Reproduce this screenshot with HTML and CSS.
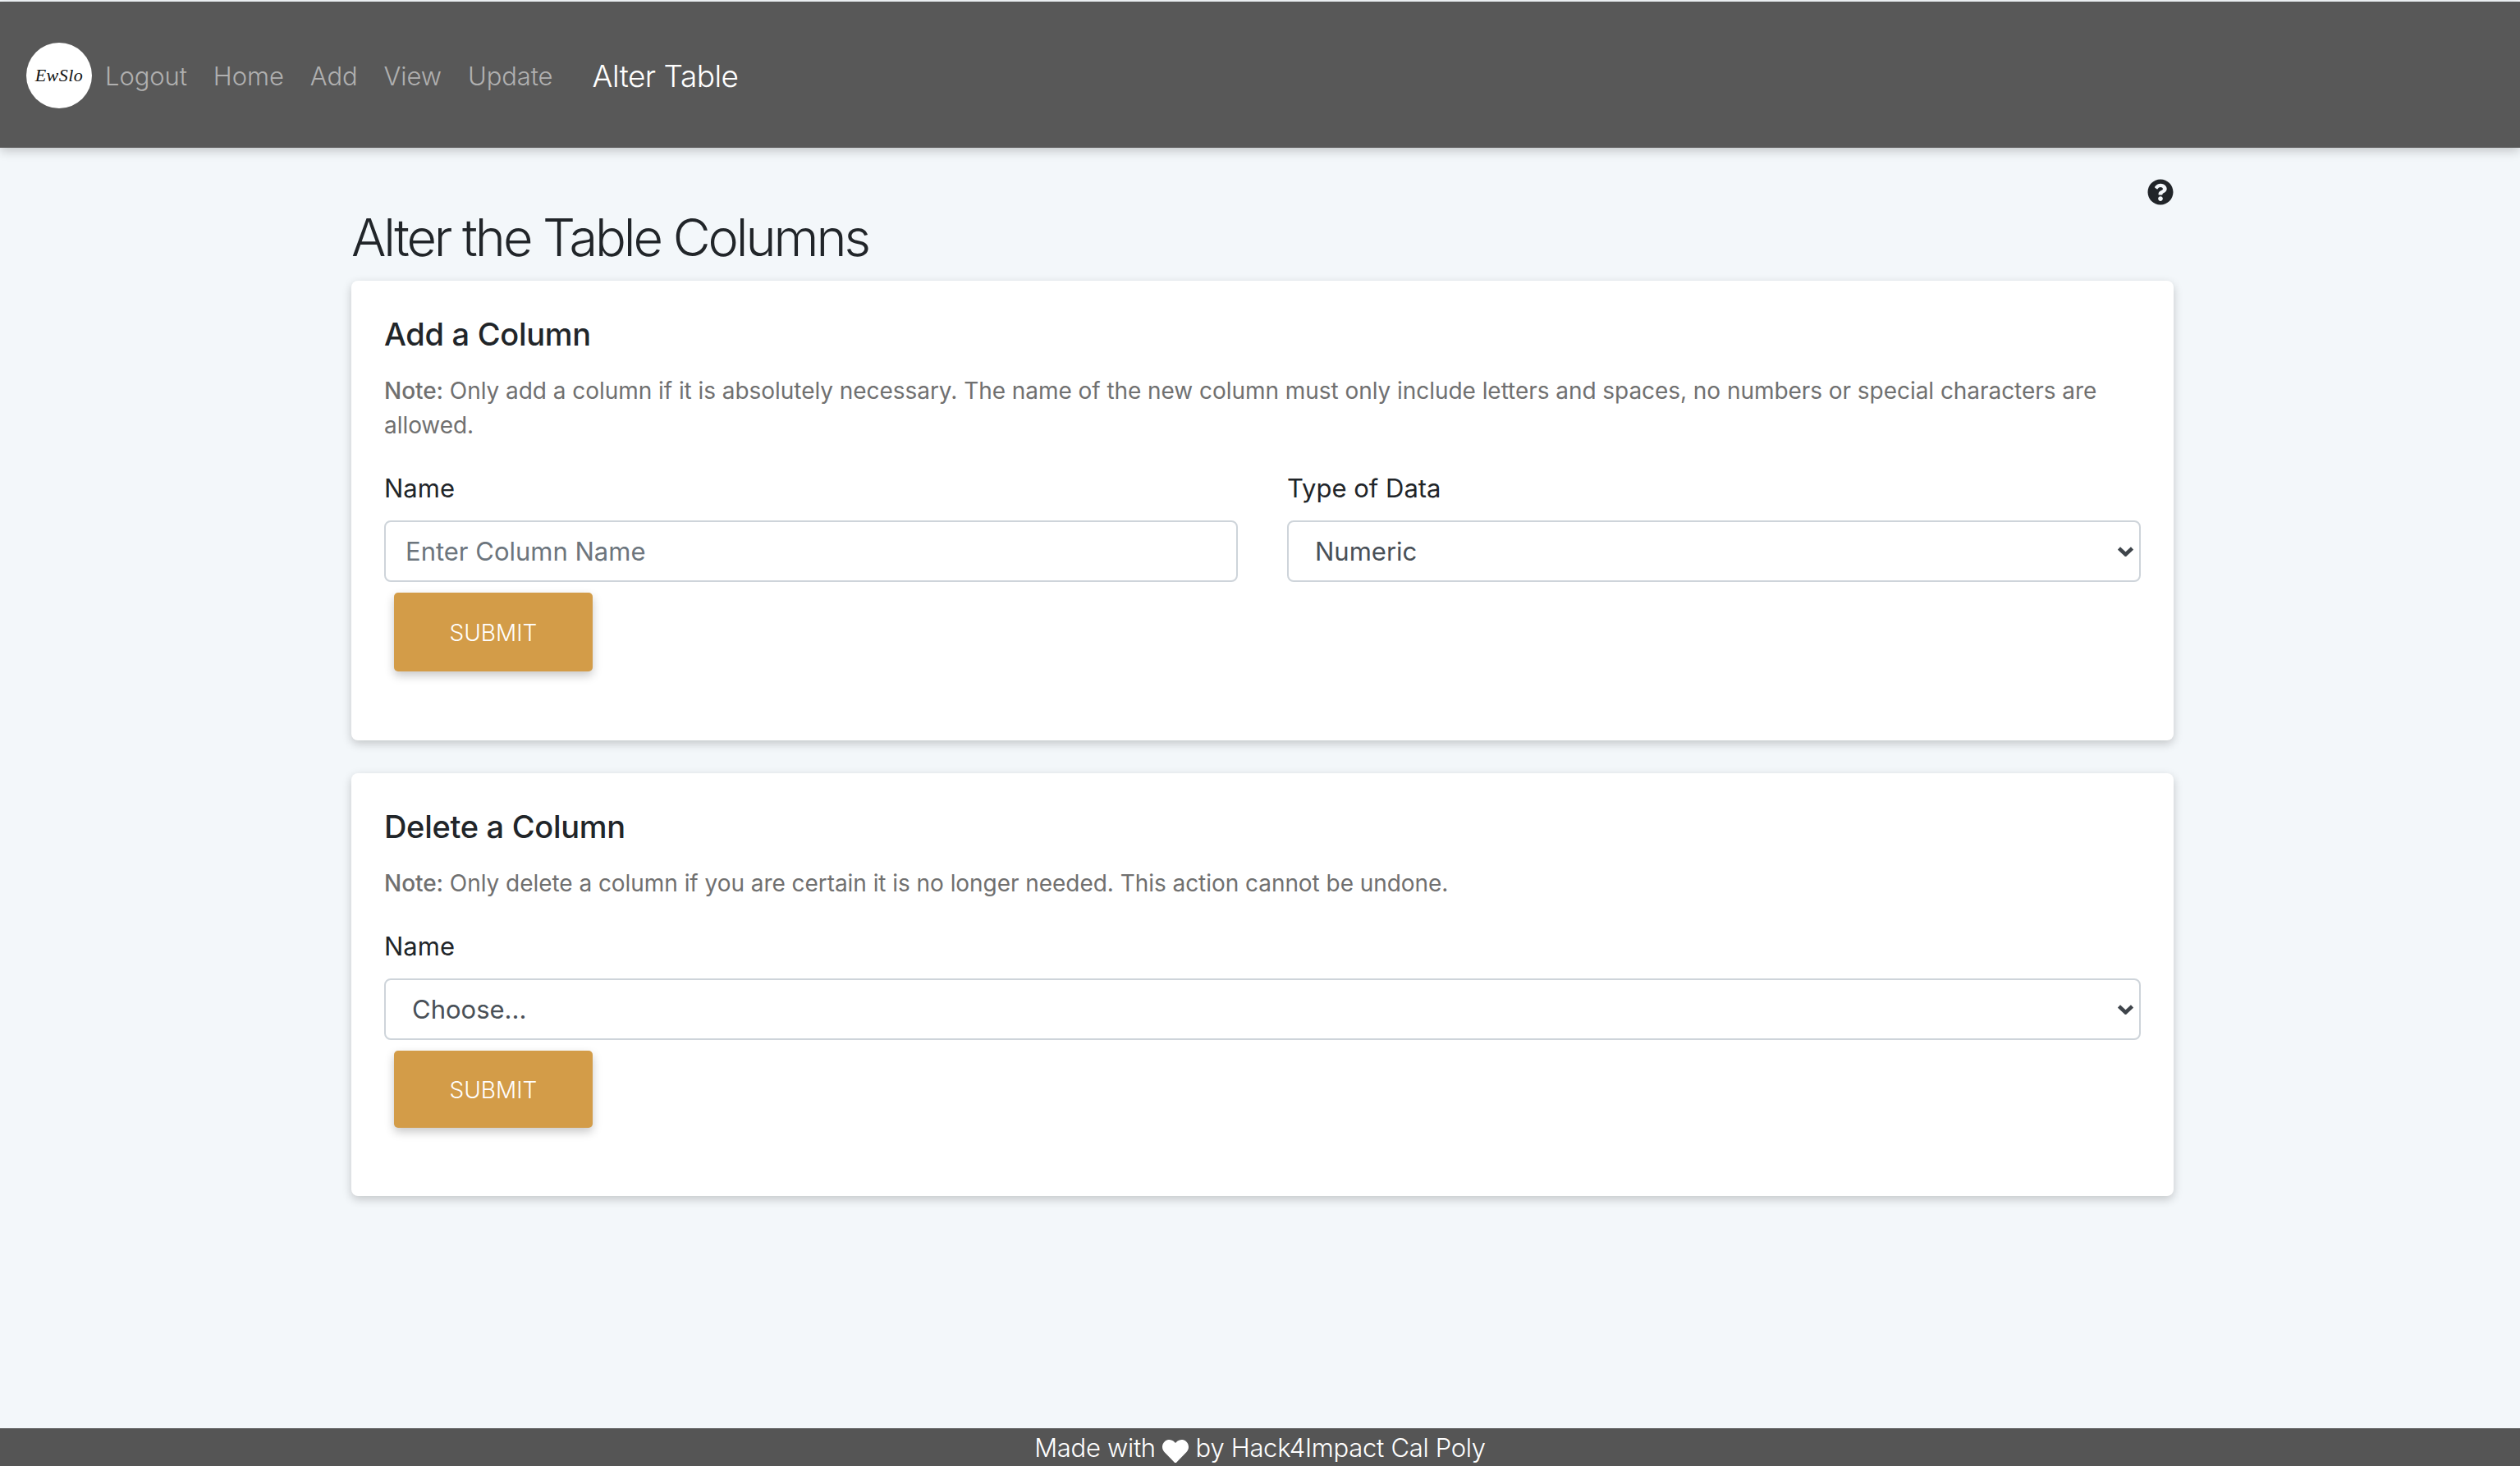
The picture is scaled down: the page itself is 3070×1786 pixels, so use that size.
FILE: index.html
```html
<!DOCTYPE html>
<html>
<head>
    <title>Alter Table</title>
    <link rel="stylesheet" href="styles.css">
</head>
<body>
    <nav class="navbar">
        <div class="brand"><span class="brand-text">EwSlo</span></div>
        <a class="nav-link" href="#">Logout</a>
        <a class="nav-link" href="#">Home</a>
        <a class="nav-link" href="#">Add</a>
        <a class="nav-link" href="#">View</a>
        <a class="nav-link" href="#">Update</a>
        <span class="nav-title">Alter Table</span>
    </nav>

    <main class="container">
        <div class="help-row">
            <svg class="help-icon" viewBox="0 0 512 512"><path d="M504 256c0 136.997-111.043 248-248 248S8 392.997 8 256C8 119.083 119.043 8 256 8s248 111.083 248 248zM262.655 90c-54.497 0-89.255 22.957-116.549 63.758-3.536 5.286-2.353 12.415 2.715 16.258l34.699 26.31c5.205 3.947 12.621 3.008 16.665-2.122 17.864-22.658 30.113-35.797 57.303-35.797 20.429 0 45.698 13.148 45.698 32.958 0 14.976-12.363 22.667-32.534 33.976C247.128 238.528 216 254.941 216 296v4c0 6.627 5.373 12 12 12h56c6.627 0 12-5.373 12-12v-1.333c0-28.462 83.186-29.647 83.186-106.667 0-58.002-60.165-102-116.531-102zM256 338c-25.365 0-46 20.635-46 46 0 25.364 20.635 46 46 46s46-20.636 46-46c0-25.365-20.635-46-46-46z"/></svg>
        </div>
        <h1>Alter the Table Columns</h1>

        <section class="card card-add">
            <h2>Add a Column</h2>
            <p class="note"><b>Note:</b> Only add a column if it is absolutely necessary. The name of the new column must only include letters and spaces, no numbers or special characters are allowed.</p>
            <form>
                <div class="form-row">
                    <div class="form-group">
                        <label for="colName">Name</label>
                        <input id="colName" type="text" placeholder="Enter Column Name">
                    </div>
                    <div class="form-group">
                        <label for="colType">Type of Data</label>
                        <div class="select-wrap">
                            <select id="colType">
                                <option>Numeric</option>
                            </select>
                            <svg class="chevron" viewBox="0 0 19 12"><polyline points="1.5,2 9.5,9.5 17.5,2"/></svg>
                        </div>
                    </div>
                </div>
                <button type="button" class="btn-submit">SUBMIT</button>
            </form>
        </section>

        <section class="card card-delete">
            <h2>Delete a Column</h2>
            <p class="note"><b>Note:</b> Only delete a column if you are certain it is no longer needed. This action cannot be undone.</p>
            <form>
                <div class="form-group">
                    <label for="delName">Name</label>
                    <div class="select-wrap">
                        <select id="delName">
                            <option>Choose...</option>
                        </select>
                        <svg class="chevron" viewBox="0 0 19 12"><polyline points="1.5,2 9.5,9.5 17.5,2"/></svg>
                    </div>
                </div>
                <button type="button" class="btn-submit">SUBMIT</button>
            </form>
        </section>
    </main>

    <footer class="footer">
        Made with
        <svg class="heart" viewBox="0 0 512 512"><path d="M462.3 62.6C407.5 15.9 326 24.3 275.7 76.2L256 96.5l-19.7-20.3C186.1 24.3 104.5 15.9 49.7 62.6c-62.8 53.6-66.1 149.8-9.9 207.9l193.5 199.8c12.5 12.9 32.8 12.9 45.3 0l193.5-199.8c56.3-58.1 53-154.3-9.8-207.9z"/></svg>
        by Hack4Impact Cal Poly
    </footer>
</body>
</html>
```

FILE: styles.css
```css
html, body {
    height: 100%;
}
body {
    font-family: Inter, "Liberation Sans", sans-serif;
    margin: 0;
    padding: 2px 0 0 0;
    box-sizing: border-box;
    background-color: #f3f7fa;
    color: #212529;
    display: flex;
    flex-direction: column;
    min-height: 1786px;
}
.navbar {
    height: 178px;
    flex: none;
    background-color: #585858;
    box-shadow: 0 4px 12px rgba(0, 0, 0, 0.2);
    display: flex;
    align-items: center;
    padding: 2px 0 0 32px;
    box-sizing: border-box;
}
.brand {
    width: 80px;
    height: 80px;
    border-radius: 50%;
    background-color: white;
    display: flex;
    align-items: center;
    justify-content: center;
    margin-right: 16px;
}
.brand-text {
    font-family: "Liberation Serif", serif;
    font-style: italic;
    font-size: 22px;
    letter-spacing: 0.5px;
    color: #111;
}
.nav-link {
    font-size: 31px;
    font-weight: 300;
    letter-spacing: -0.1px;
    color: #b0b0b0;
    text-decoration: none;
    margin-right: 32px;
}
.nav-title {
    font-size: 37px;
    font-weight: 300;
    letter-spacing: -0.5px;
    color: white;
    margin-left: 16px;
}
.container {
    width: 2220px;
    margin: 0 0 0 428px;
    flex: 1;
}
.help-row {
    display: flex;
    justify-content: flex-end;
    padding: 38px 0 0 0;
    height: 34px;
}
.help-icon {
    width: 32px;
    height: 32px;
    fill: #212529;
}
h1 {
    font-size: 63px;
    font-weight: 300;
    letter-spacing: -3.05px;
    line-height: 74px;
    margin: 0 0 16px 0;
}
.card {
    background-color: white;
    border-radius: 8px;
    box-shadow: 0 4px 12px rgba(0, 0, 0, 0.2);
    padding: 42px 40px 0 40px;
    box-sizing: border-box;
    margin-bottom: 40px;
}
.card-add {
    height: 560px;
}
.card-delete {
    height: 515px;
}
h2 {
    font-size: 38px;
    font-weight: 500;
    letter-spacing: -0.3px;
    line-height: 46px;
    margin: 0 0 25px 0;
}
.note {
    font-size: 28px;
    letter-spacing: -0.05px;
    line-height: 42px;
    color: #707070;
    margin: 0 0 33px 0;
}
.note b {
    font-weight: 500;
}
.form-row {
    display: grid;
    grid-template-columns: 1fr 1fr;
    gap: 60px;
}
label {
    display: block;
    font-size: 31px;
    line-height: 46px;
    margin-bottom: 16px;
}
input, select {
    display: block;
    width: 100%;
    height: 75px;
    box-sizing: border-box;
    border: 2px solid #ced4da;
    border-radius: 8px;
    background-color: white;
    font-family: inherit;
    font-size: 31px;
    color: #495057;
    padding: 0 24px;
}
select {
    appearance: none;
    padding: 0 32px;
}
input::placeholder {
    color: #6c757d;
}
.select-wrap {
    position: relative;
}
.chevron {
    position: absolute;
    right: 9px;
    top: 32px;
    width: 19px;
    height: 12px;
    fill: none;
    stroke: #3f454b;
    stroke-width: 4.5;
}
.btn-submit {
    display: block;
    width: 242px;
    height: 96px;
    margin: 13px 0 0 12px;
    padding: 2px 0 0 0;
    border: none;
    border-radius: 5px;
    background-color: #d39c48;
    color: white;
    font-family: inherit;
    font-size: 28px;
    font-weight: 300;
    box-shadow: 0 5px 12px rgba(0, 0, 0, 0.22);
}
.card-delete .btn-submit {
    height: 94px;
}
.footer {
    height: 46px;
    flex: none;
    box-sizing: border-box;
    padding-top: 1px;
    background-color: #555555;
    color: white;
    font-size: 31px;
    font-weight: 300;
    letter-spacing: -0.3px;
    line-height: 46px;
    text-align: center;
    white-space: nowrap;
    overflow: hidden;
}
.heart {
    width: 32px;
    height: 32px;
    fill: white;
    vertical-align: -9px;
}
```
